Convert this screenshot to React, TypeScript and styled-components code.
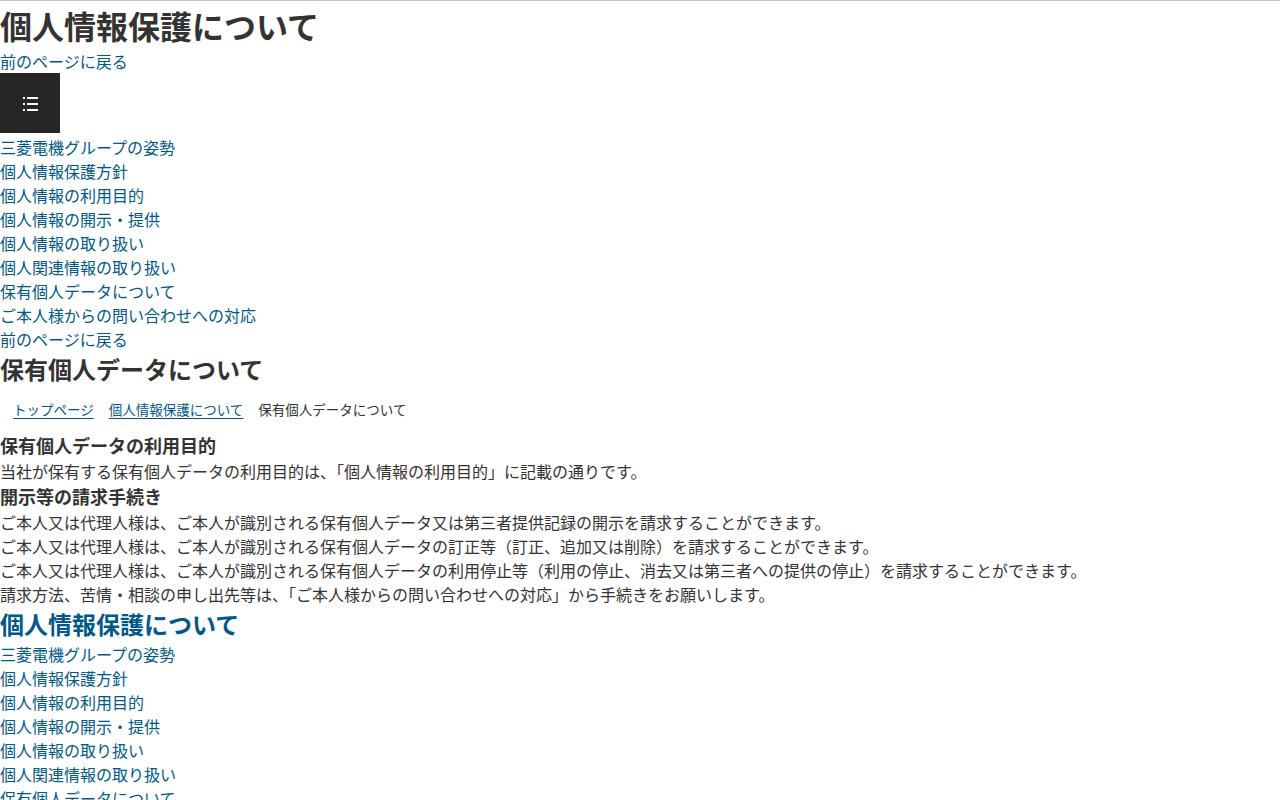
import React from "react";
import styled, { createGlobalStyle } from "styled-components";

const GlobalStyle = createGlobalStyle`
  html, body {
    margin: 0;
    padding: 0;
    background: #ffffff;
  }
  body {
    font-family: "Noto Sans CJK JP", "Noto Sans", sans-serif;
    color: #333333;
    font-size: 16px;
    line-height: 24px;
  }
  * { box-sizing: border-box; }
`;

const LINK = "#00598a";

const TopRule = styled.div`
  height: 1px;
  background: #c4c4c4;
`;

const PageTitle = styled.h1`
  margin: 0;
  font-size: 32px;
  line-height: 48px;
  font-weight: 700;
  color: #333333;
`;

const TextLink = styled.a`
  display: block;
  color: ${LINK};
  text-decoration: none;
  font-size: 16px;
  line-height: 24px;
`;

const MenuButton = styled.button`
  display: flex;
  align-items: center;
  justify-content: center;
  width: 60px;
  height: 60px;
  margin: 0 0 2px;
  padding: 0;
  border: none;
  background: #262626;
  cursor: pointer;
`;

const NavList = styled.ul`
  list-style: none;
  margin: 0;
  padding: 0;
`;

const NavItem = styled.li`
  font-size: 16px;
  line-height: 24px;
`;

const SectionTitle = styled.h2<{ $accent?: boolean }>`
  margin: 0;
  font-size: 24px;
  line-height: 36px;
  font-weight: 700;
  color: ${(p) => (p.$accent ? LINK : "#333333")};
`;

const Breadcrumb = styled.ol`
  display: flex;
  gap: 15px;
  list-style: none;
  margin: 0;
  padding: 12px 13px;
  font-size: 13.5px;
  line-height: 21px;
`;

const Crumb = styled.li``;

const CrumbLink = styled.a`
  color: ${LINK};
  text-decoration: underline;
  text-underline-offset: 3px;
`;

const SubTitle = styled.h3`
  margin: 0;
  font-size: 18px;
  line-height: 27px;
  font-weight: 700;
  color: #333333;
`;

const Para = styled.p`
  margin: 0;
  font-size: 16px;
  line-height: 24px;
`;

const ListIcon = () => (
  <svg width="16" height="16" viewBox="0 0 16 16" fill="#ffffff">
    <rect x="1" y="2" width="2" height="2" />
    <rect x="5" y="2" width="11" height="2" />
    <rect x="1" y="8" width="2" height="2" />
    <rect x="5" y="8" width="11" height="2" />
    <rect x="1" y="14" width="2" height="2" />
    <rect x="5" y="14" width="11" height="2" />
  </svg>
);

const navItems = [
  "三菱電機グループの姿勢",
  "個人情報保護方針",
  "個人情報の利用目的",
  "個人情報の開示・提供",
  "個人情報の取り扱い",
  "個人関連情報の取り扱い",
  "保有個人データについて",
  "ご本人様からの問い合わせへの対応",
];

const Nav = () => (
  <NavList>
    {navItems.map((t) => (
      <NavItem key={t}>
        <TextLink href="#">{t}</TextLink>
      </NavItem>
    ))}
  </NavList>
);

export default function App() {
  return (
    <>
      <GlobalStyle />
      <TopRule />
      <PageTitle>個人情報保護について</PageTitle>
      <TextLink href="#">前のページに戻る</TextLink>
      <MenuButton aria-label="メニュー">
        <ListIcon />
      </MenuButton>
      <Nav />
      <TextLink href="#">前のページに戻る</TextLink>
      <SectionTitle>保有個人データについて</SectionTitle>
      <Breadcrumb>
        <Crumb>
          <CrumbLink href="#">トップページ</CrumbLink>
        </Crumb>
        <Crumb>
          <CrumbLink href="#">個人情報保護について</CrumbLink>
        </Crumb>
        <Crumb>保有個人データについて</Crumb>
      </Breadcrumb>
      <SubTitle>保有個人データの利用目的</SubTitle>
      <Para>当社が保有する保有個人データの利用目的は、「個人情報の利用目的」に記載の通りです。</Para>
      <SubTitle>開示等の請求手続き</SubTitle>
      <Para>ご本人又は代理人様は、ご本人が識別される保有個人データ又は第三者提供記録の開示を請求することができます。</Para>
      <Para>ご本人又は代理人様は、ご本人が識別される保有個人データの訂正等（訂正、追加又は削除）を請求することができます。</Para>
      <Para>ご本人又は代理人様は、ご本人が識別される保有個人データの利用停止等（利用の停止、消去又は第三者への提供の停止）を請求することができます。</Para>
      <Para>請求方法、苦情・相談の申し出先等は、「ご本人様からの問い合わせへの対応」から手続きをお願いします。</Para>
      <SectionTitle $accent>個人情報保護について</SectionTitle>
      <Nav />
    </>
  );
}
